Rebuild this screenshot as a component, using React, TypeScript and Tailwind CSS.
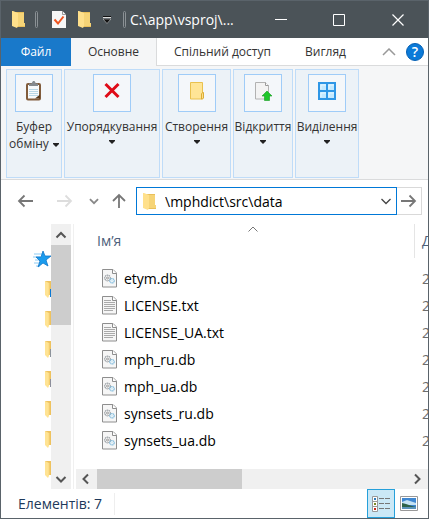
import React from "react";

const files = [
  { name: "etym.db", kind: "db" },
  { name: "LICENSE.txt", kind: "txt" },
  { name: "LICENSE_UA.txt", kind: "txt" },
  { name: "mph_ru.db", kind: "db" },
  { name: "mph_ua.db", kind: "db" },
  { name: "synsets_ru.db", kind: "db" },
  { name: "synsets_ua.db", kind: "db" },
];

const treeMarks = ["#0a78d4", "none", "#8d939b", "#8d8f9b", "none", "none", "none"];

function Folder() {
  return (
    <svg width="13" height="17" viewBox="0 0 13 17" className="shrink-0">
      <path d="M3 1h9v11h1v4H3z" fill="#e9bf5a" />
      <path d="M1 0l5 2v13l-1 2-5-2V0z" fill="#ffe08b" />
      <path d="M6 2h6v10h1v3H6z" fill="#f6d477" />
    </svg>
  );
}

function TreeFolder({ mark }: { mark: string }) {
  return (
    <svg width="6" height="18" viewBox="0 0 6 18" className="block">
      <path d="M0 1h6v14H0z" fill="#eec25e" />
      <path d="M0 1l4 2v13l-1 2-3-3z" fill="#ffe393" />
      <path d="M4 3v12" stroke="#f8d67c" />
      <path d="M5.500 9v8" stroke={mark} />
    </svg>
  );
}

function FileIcon({ kind }: { kind: string }) {
  return (
    <svg width="16" height="19" viewBox="0 0 16 19" className="shrink-0">
      <path d="M.5.5h10.500l3.500 3.500v14H.5z" fill="#f6f6f6" stroke="#8e8e8e" />
      <path d="M10.500.5v4h4" fill="#fff" stroke="#8e8e8e" />
      {kind === "txt" ? (
        <path d="M2 4.500h7M2 6.500h11M2 8.500h11M2 10.500h11M2 12.500h11M2 14.500h9" stroke="#aaa" />
      ) : (
        <g fill="none">
          <circle cx="5.500" cy="9" r="2.800" stroke="#9aa0a5" strokeWidth="1.200" strokeDasharray="1.500 .5" />
          <circle cx="5.500" cy="9" r="1" stroke="#888" strokeWidth=".8" />
          <circle cx="10" cy="11.800" r="2.200" stroke="#7bb9dd" strokeWidth="1.200" strokeDasharray="1.300 .4" />
          <circle cx="10" cy="11.800" r=".7" fill="#b8e2f5" />
        </g>
      )}
    </svg>
  );
}

function Chevron({ d, size = 20, color = "#555", stroke = 2 }: { d: "up" | "down" | "left" | "right"; size?: number; color?: string; stroke?: number }) {
  const paths = { up: "M5.500 12.500L10 8l4.500 4.500", down: "M5.500 8l4.500 4.500L14.500 8", left: "M12 5.500L7.500 10l4.500 4.500", right: "M8 5.500l4.500 4.500L8 14.500" };
  return (
    <svg width={size} height={size} viewBox="0 0 20 20" fill="none" stroke={color} strokeWidth={stroke} className="block shrink-0">
      <path d={paths[d]} />
    </svg>
  );
}

function Arrow({ d, color = "#777" }: { d: "up" | "left" | "right"; color?: string }) {
  const paths = { left: "M16 8H2M7.500 2.500L2 8l5.500 5.500", right: "M0 8h14M8.500 2.500L14 8l-5.500 5.500", up: "M8 15V2M2 8l6-6 6 6" };
  return (
    <svg width="16" height="16" viewBox="0 0 16 16" fill="none" stroke={color} strokeWidth="1.800" className="block">
      <path d={paths[d]} />
    </svg>
  );
}

function Caret() {
  return (
    <svg width="6" height="4" viewBox="0 0 6 4" className="inline-block">
      <path d="M0 0h6v1L4 3v.5H2V3L0 1z" fill="#222" />
    </svg>
  );
}

const clipboardIcon = (
  <svg width="16" height="20" viewBox="0 0 16 20">
    <rect x="1" y="3" width="13" height="15.500" rx="1" fill="#f7fafc" stroke="#815c3c" strokeWidth="2" />
    <path d="M3 8.500h9M3 10.500h9M3 12.500h9M3 14.500h9" stroke="#b9d7e6" />
    <path d="M9 17.500h5v-4z" fill="#5a3a1c" />
    <path d="M3 2.500h2.500L7 0h1.500L10 2.500h2V5H3z" fill="#848a8f" />
  </svg>
);
const deleteIcon = (
  <svg width="18" height="20" viewBox="0 0 18 20" fill="none" stroke="#df0b18" strokeWidth="3">
    <path d="M2.500 3l13 13M15.500 3l-13 13" />
  </svg>
);
const createIcon = (
  <svg width="16" height="20" viewBox="0 0 16 20">
    <path d="M1.500 1.500h12V18h-12z" fill="#ffe596" stroke="#e9c14e" />
    <path d="M12.500 18v-5l1-1.500h1V17l-1 1z" fill="#ffe08a" stroke="#dbad36" />
  </svg>
);
const openIcon = (
  <svg width="18" height="20" viewBox="0 0 18 20">
    <path d="M1.500 1.500h10l3 3V18h-13z" fill="#f3f3f3" stroke="#b2b2b2" />
    <path d="M11.500 1.500v3h3" fill="#fff" stroke="#9a9a9a" />
    <path d="M13 10l5 5h-2.500v4.500h-5V15H8z" fill="#1fc62a" stroke="#159a20" strokeWidth=".6" />
  </svg>
);
const selectIcon = (
  <svg width="18" height="20" viewBox="0 0 18 20">
    <path d="M1 2h16v16H1z" fill="#c3e9ff" />
    <path d="M3 8V4h5M11 8V4h5M3 16v-4h5M11 16v-4h5" fill="none" stroke="#e6f7ff" />
    <path d="M1 2h16v16H1zM9 2v16M1 10h16" fill="none" stroke="#2f97e6" strokeWidth="2" />
  </svg>
);

const groups = [
  { label: "Упорядкування", icon: deleteIcon, width: "w-24" },
  { label: "Створення", icon: createIcon, width: "w-[69px]" },
  { label: "Відкриття", icon: openIcon, width: "w-[60px]" },
  { label: "Виділення", icon: selectIcon, width: "w-16" },
];

function RibbonButton({ icon, width, children }: { icon: React.ReactNode; width: string; children: React.ReactNode }) {
  return (
    <button className={"flex h-[109px] shrink-0 flex-col items-center border border-[#bfdcf8] bg-[#ecf2f7] pt-1 text-[12px] leading-[17px] text-[#333] " + width}>
      <span className="mb-1.5 flex h-[38px] w-[38px] justify-center border border-[#9fccf8] bg-[#f4f7fa] pt-1.5">{icon}</span>
      {children}
    </button>
  );
}

export default function App() {
  return (
    <main className="flex w-full flex-col overflow-hidden border border-[#5a636a] bg-white font-['Open_Sans','Noto_Sans',sans-serif] text-[14px] text-black">
      <header className="flex h-[37px] items-center bg-[#4b5358] pl-[11px] text-white">
        <Folder />
        <span className="ml-2.5 h-[17px] w-[3px] rounded-sm border border-[#8b9195]" />
        <button aria-label="Властивості" className="ml-3.5">
          <svg width="15" height="19" viewBox="0 0 15 19">
            <path d="M0 1h10.500L14 4.500V18H0z" fill="#f7f7f7" />
            <path d="M10.500 1v3.500H14" fill="none" stroke="#999" />
            <path d="M2.500 9.500l3.500 4 5.500-7" fill="none" stroke="#ef5521" strokeWidth="2" />
          </svg>
        </button>
        <button aria-label="Нова папка" className="ml-[11px]"><Folder /></button>
        <button aria-label="Настроїти панель" className="ml-3">
          <svg width="8" height="8" viewBox="0 0 8 8"><path d="M0 .5h8" stroke="#111" /><path d="M0 1.500h8" stroke="#ddd" /><path d="M0 3h8L4 7.500z" fill="#111" stroke="#ddd" strokeWidth=".5" /></svg>
        </button>
        <span className="ml-3 h-[17px] w-[3px] rounded-sm border border-[#8b9195]" />
        <h1 className="ml-1 min-w-0 flex-1 whitespace-nowrap">C:\app\vsproj\...</h1>
        <button aria-label="Згорнути" className="flex h-full w-[58px] items-center justify-center"><svg width="12" height="12"><path d="M0 5.500h12" stroke="#fff" /></svg></button>
        <button aria-label="Розгорнути" className="flex h-full w-[58px] items-center justify-center"><svg width="12" height="12"><path d="M.5.5h11v11H.5z" fill="none" stroke="#fff" /></svg></button>
        <button aria-label="Закрити" className="flex h-full w-[60px] items-center justify-center"><svg width="12" height="12"><path d="M.5.5l11 11M11.500.5l-11 11" fill="none" stroke="#fff" strokeWidth="1.200" /></svg></button>
      </header>

      <nav className="flex h-7 items-stretch text-[12px] text-[#333]">
        <button className="w-[70px] bg-[#1979ca] text-white">Файл</button>
        <button className="w-[86px] border-r border-[#dadbdc] bg-[#f5f6f7]">Основне</button>
        <button className="w-[131px] border-b border-[#dadbdc]">Спільний доступ</button>
        <button className="w-[75px] border-b border-[#dadbdc]">Вигляд</button>
        <div className="flex flex-1 items-center justify-end gap-2.5 border-b border-[#dadbdc] pr-1">
          <button aria-label="Згорнути стрічку"><svg width="14" height="8" fill="none" stroke="#999" strokeWidth="1.500"><path d="M1 7l6-6 6 6" /></svg></button>
          <button aria-label="Довідка" className="flex h-[18px] w-[18px] items-center justify-center rounded-full border border-[#0560b4] bg-[#0b7ad8] text-[14px] font-semibold text-white">?</button>
        </div>
      </nav>

      <section className="flex gap-0.5 border-b border-[#dadbdc] bg-[#f5f6f7] px-[5px] pt-[3px] pb-px">
        <RibbonButton icon={clipboardIcon} width="w-14">
          <span className="whitespace-nowrap">Буфер<br />обміну<span className="ml-1"><Caret /></span></span>
        </RibbonButton>
        {groups.map((g) => (
          <RibbonButton key={g.label} icon={g.icon} width={g.width}>
            <span>{g.label}</span>
            <span className="leading-3"><Caret /></span>
          </RibbonButton>
        ))}
      </section>

      <section className="flex h-11 items-center pr-1.5 pb-0.5 pl-4">
        <button aria-label="Назад"><Arrow d="left" /></button>
        <button aria-label="Вперед" className="ml-6"><Arrow d="right" color="#ddd" /></button>
        <button aria-label="Останні розташування" className="ml-3"><Chevron d="down" size={18} color="#888" /></button>
        <button aria-label="Угору" className="mr-[9px] ml-2"><Arrow d="up" /></button>
        <div className="flex h-7 min-w-0 flex-1 items-center border border-[#0078d7] pl-1.5">
          <Folder />
          <input aria-label="Адреса" defaultValue="\mphdict\src\data" className="ml-[9px] min-w-0 flex-1 outline-none" />
          <button aria-label="Показати адреси"><Chevron d="down" color="#444" stroke={1.3} /></button>
        </div>
        <button aria-label="Перейти" className="flex h-7 w-[25px] items-center justify-center border border-l-0 border-[#d9d9d9]"><Arrow d="right" /></button>
      </section>

      <div className="flex h-[265px]">
        <aside className="flex w-[50px] flex-col items-end overflow-hidden pt-5">
          <svg width="19" height="30" viewBox="0 0 19 30" className="shrink-0">
            <path d="M2 10h9M1 13h7M3 16h7M2 19h6M4 22h4" stroke="#8ccbf4" />
            <path d="M11 7l2 5h6l-5 4 2 6-5-3-5 4 2-6-4-4h5z" fill="#1b9cee" stroke="#1276c8" strokeWidth=".8" />
          </svg>
          {treeMarks.map((m, i) => (
            <span key={i} className="flex h-[30px] shrink-0 items-center"><TreeFolder mark={m} /></span>
          ))}
        </aside>
        <div className="flex w-5 flex-col bg-[#f0f0f0]">
          <button aria-label="Прокрутити вгору" className="h-[21px]"><Chevron d="up" /></button>
          <div className="h-20 bg-[#cdcdcd]" />
          <button aria-label="Прокрутити вниз" className="mt-auto h-5"><Chevron d="down" /></button>
        </div>
        <div className="ml-0.5 w-px bg-[#f0f0f0]" />
        <div className="ml-0.5 flex min-w-0 flex-1 flex-col">
          <div className="relative flex h-[41px] pl-[21px]">
            <h2 className="flex-1 pt-[7px] leading-5 text-[#4c607a]">Ім’я</h2>
            <svg width="10" height="6" fill="none" stroke="#777" className="absolute top-0.5 left-[172px]"><path d="M.5 5.500L5 1l4.500 4.500" /></svg>
            <div className="h-[34px] w-3.5 overflow-hidden border-l border-[#e5e5e5] pt-[7px] pl-[7px] leading-5 text-[#4c607a]">Д</div>
          </div>
          <ul>
            {files.map((f) => (
              <li key={f.name} className="flex h-[27px] items-center pl-[26px]">
                <FileIcon kind={f.kind} />
                <span className="ml-1.5 flex-1">{f.name}</span>
                <span className="w-1.5 overflow-hidden text-[#6d6d6d]">2</span>
              </li>
            ))}
          </ul>
          <div className="mt-auto flex h-5 bg-[#f0f0f0]">
            <button aria-label="Прокрутити ліворуч" className="w-[21px]"><Chevron d="left" /></button>
            <div className="w-[145px] bg-[#cdcdcd]" />
            <button aria-label="Прокрутити праворуч" className="ml-auto w-[21px]"><Chevron d="right" /></button>
          </div>
        </div>
      </div>

      <footer className="flex h-[29px] items-center pr-2.5 pl-[17px] text-[#1e395b]">
        <span>Елементів: 7</span>
        <span className="ml-3 h-[22px] w-px bg-[#eee]" />
        <button aria-label="Таблиця" className="ml-auto flex h-[29px] w-7 items-center justify-center border border-[#26a0da] bg-[#cbe8f6]">
          <svg width="18" height="16" viewBox="0 0 18 16">
            <path d="M.5.5h5v5h-5zM.5 5.500h5v5h-5zM.5 10.500h5v5h-5z" fill="#fff" stroke="#999" />
            <path d="M2 2h2v2H2z" fill="#2e7dbd" /><path d="M2 7h2v2H2z" fill="#7b8a25" /><path d="M2 12h2v2H2z" fill="#c8281c" />
            <path d="M7 2.500h5M13 2.500h5M7 7.500h5M13 7.500h5M7 12.500h5M13 12.500h5" stroke="#777" />
          </svg>
        </button>
        <button aria-label="Великі ескізи" className="ml-[5px]">
          <svg width="18" height="15" viewBox="0 0 18 15">
            <path d="M.5.5h17v14H.5z" fill="#fff" stroke="#999" />
            <path d="M2 2h14v11H2z" fill="#3f87d1" />
            <path d="M2 6l5-2 9 3v2H2z" fill="#c4e2f3" /><path d="M2 7l4 1 6 2 4 1H2z" fill="#2d6248" /><path d="M2 11h14v2H2z" fill="#5a93ba" />
          </svg>
        </button>
      </footer>
    </main>
  );
}
